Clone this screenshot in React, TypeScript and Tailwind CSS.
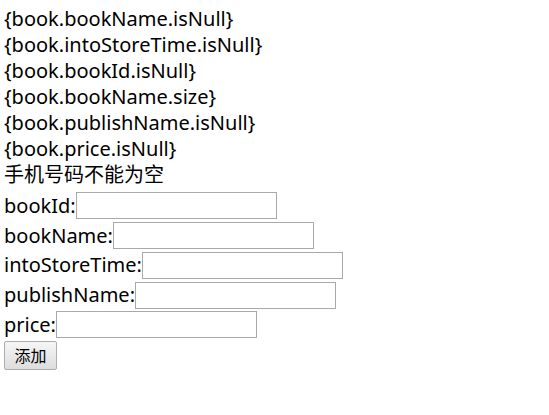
import React from 'react';

const errors = [
  '{book.bookName.isNull}',
  '{book.intoStoreTime.isNull}',
  '{book.bookId.isNull}',
  '{book.bookName.size}',
  '{book.publishName.isNull}',
  '{book.price.isNull}',
  '手机号码不能为空',
];

const fields = ['bookId', 'bookName', 'intoStoreTime', 'publishName', 'price'];

export default function App() {
  return (
    <div
      className="min-h-[415px] bg-white px-1 pt-[6px] text-[20px] text-black"
      style={{ fontFamily: '"Noto Sans", "Noto Sans CJK SC", sans-serif' }}
    >
      {errors.map((e) => (
        <div key={e} className="leading-[26px]">{e}</div>
      ))}
      <form className="mt-[3px]" onSubmit={(e) => e.preventDefault()}>
        {fields.map((f) => (
          <div key={f} className="flex h-[29.75px] items-center">
            <span className="leading-[26px]">{f}:</span>
            <input
              type="text"
              name={f}
              className="h-[27px] w-[201px] border border-[#a9a9a9] bg-white px-1 text-[13px] outline-none"
            />
          </div>
        ))}
        <button
          type="submit"
          className="h-[29px] w-[53px] rounded-[2px] border border-[#adadad] bg-gradient-to-b from-[#f6f6f6] to-[#dddddd] text-[16px] leading-none"
        >
          添加
        </button>
      </form>
    </div>
  );
}
